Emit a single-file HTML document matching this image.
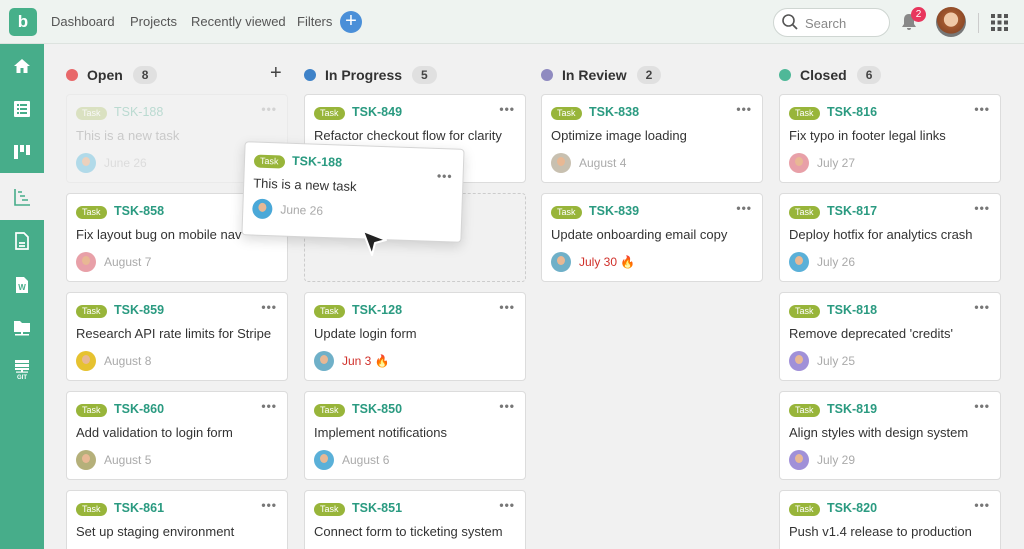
<!DOCTYPE html>
<html style="width:1024px;height:549px;overflow:hidden"><head><meta charset="utf-8"><style>
*{box-sizing:border-box;margin:0;padding:0}
body{width:1024px;height:549px;overflow:hidden;background:#f1f1f1;font-family:"Liberation Sans",sans-serif;position:relative}
.top{position:absolute;left:0;top:0;width:1024px;height:44px;background:#eef3f0;border-bottom:1px solid #dde3df}
.logo{position:absolute;left:9px;top:8px;width:28px;height:28px;background:#47b08a;border-radius:5px;color:#fff;font-weight:bold;font-size:17px;text-align:center;line-height:27px}
.nav{position:absolute;top:14px;font-size:13px;color:#555}
.plus{position:absolute;left:340px;top:11px;width:22px;height:22px;border-radius:50%;background:#4a8fd8;color:#fff;text-align:center;font-size:20px;line-height:21px}
.search{position:absolute;left:773px;top:8px;width:117px;height:29px;border:1px solid #cfd6d2;border-radius:15px;background:#fff;font-size:13px;color:#888;padding:7px 0 0 31px}
.side{position:absolute;left:0;top:44px;width:44px;height:505px;background:#47ad8a}
.act{position:absolute;left:0;top:173px;width:44px;height:47px;background:#f1f1f1}
.ic{position:absolute;left:13px;width:18px;height:18px}
.hd{position:absolute;top:66px;font-size:14px;font-weight:bold;color:#333;display:flex;align-items:center}
.dot{width:12px;height:12px;border-radius:50%;margin-right:9px}
.cnt{margin-left:10px;background:#e0e0e0;border-radius:10px;font-size:12px;padding:2px 9px;color:#444}
.card{position:absolute;width:222px;height:89px;background:#fff;border:1px solid #dcdcdc;border-radius:4px}
.tag{position:absolute;left:9px;top:12px;background:#98b53a;color:#fff;font-size:9px;border-radius:7px;padding:1px 6px;line-height:11px}
.id{position:absolute;left:47px;top:10px;font-size:12.5px;font-weight:bold;color:#2a9a80}
.more{position:absolute;right:10px;top:7px;font-size:12px;color:#777;letter-spacing:1px;font-weight:bold}
.tt{position:absolute;left:9px;top:33px;font-size:13px;color:#333;white-space:nowrap}
.av{position:absolute;left:9px;top:58px;width:20px;height:20px;border-radius:50%;overflow:hidden}
.av:after{content:"";position:absolute;left:6px;top:4px;width:8px;height:9px;border-radius:50%;background:#e8b894}
.dt{position:absolute;left:37px;top:61px;font-size:12px;color:#aaa}
.red{color:#d0302a}
</style></head><body>
<div class="top"></div>
<div class="logo">b</div>
<div class="nav" style="left:51px">Dashboard</div>
<div class="nav" style="left:130px">Projects</div>
<div class="nav" style="left:191px">Recently viewed</div>
<div class="nav" style="left:297px">Filters</div>
<div class="plus">+</div>
<div class="search">Search</div>
<svg style="position:absolute;left:781px;top:13px" width="18" height="18" viewBox="0 0 18 18"><circle cx="7.5" cy="7.5" r="5.5" fill="none" stroke="#555" stroke-width="1.6"/><path d="M11.5 11.5L16 16" stroke="#555" stroke-width="1.8"/></svg>
<svg style="position:absolute;left:900px;top:12px" width="18" height="20" viewBox="0 0 18 20"><path d="M9 2C5 2 4 5 4 8v4l-2 3h14l-2-3V8c0-3-1-6-5-6zM7 16a2 2 0 004 0z" fill="#888"/></svg>
<div style="position:absolute;left:911px;top:7px;width:15px;height:15px;border-radius:50%;background:#e8365d;color:#fff;font-size:10px;text-align:center;line-height:15px">2</div>
<div style="position:absolute;left:936px;top:7px;width:30px;height:30px;border-radius:50%;background:radial-gradient(circle at 50% 42%,#f0c9a8 30%,#a2582f 32%,#8e4a28 60%,#777 62%)"></div>
<div style="position:absolute;left:978px;top:13px;width:1px;height:20px;background:#ccc"></div>
<svg style="position:absolute;left:991px;top:14px" width="17" height="17" viewBox="0 0 17 17" fill="#555"><rect x="0" y="0" width="4" height="4"/><rect x="6.5" y="0" width="4" height="4"/><rect x="13" y="0" width="4" height="4"/><rect x="0" y="6.5" width="4" height="4"/><rect x="6.5" y="6.5" width="4" height="4"/><rect x="13" y="6.5" width="4" height="4"/><rect x="0" y="13" width="4" height="4"/><rect x="6.5" y="13" width="4" height="4"/><rect x="13" y="13" width="4" height="4"/></svg>

<div class="side"></div><div class="act"></div>
<svg class="ic" style="top:57px" viewBox="0 0 18 18"><path d="M9 2L1 9h2.5v7h4v-5h3v5h4V9H17z" fill="#fff"/></svg>
<svg class="ic" style="top:100px" viewBox="0 0 18 18"><rect x="1" y="1" width="16" height="16" rx="1" fill="#fff"/><g fill="#47ad8a"><rect x="4" y="4" width="2" height="2"/><rect x="7" y="4" width="7" height="2"/><rect x="4" y="8" width="2" height="2"/><rect x="7" y="8" width="7" height="2"/><rect x="4" y="12" width="2" height="2"/><rect x="7" y="12" width="7" height="2"/></g></svg>
<svg class="ic" style="top:143px" viewBox="0 0 18 18" fill="#fff"><rect x="1" y="2" width="4" height="14"/><rect x="7" y="2" width="4" height="7"/><rect x="13" y="2" width="4" height="10"/></svg>
<svg class="ic" style="top:188px" viewBox="0 0 18 18" fill="none" stroke="#47ad8a" stroke-width="1.6"><path d="M2 1v16h15M5 4h4M7 8h5M9 12h6"/></svg>
<svg class="ic" style="top:232px" viewBox="0 0 18 18" fill="none" stroke="#fff" stroke-width="1.7"><path d="M3 1h8l4 4v12H3zM6 11h6M6 14h6"/></svg>
<svg class="ic" style="top:276px" viewBox="0 0 18 18"><path d="M3 1h8l4 4v12H3z" fill="#fff"/><text x="9" y="14" font-size="8" font-weight="bold" fill="#47ad8a" text-anchor="middle" font-family="Liberation Sans">W</text></svg>
<svg class="ic" style="top:319px" viewBox="0 0 18 18" fill="#fff"><path d="M1 2h6l2 2h8v9H1z"/><rect x="8" y="13" width="2" height="2"/><rect x="2" y="15" width="14" height="1.5"/></svg>
<svg class="ic" style="top:359px;height:20px" viewBox="0 0 18 20" fill="#fff"><rect x="2" y="1" width="14" height="3"/><rect x="2" y="5" width="14" height="3"/><rect x="2" y="9" width="14" height="2"/><rect x="8" y="11" width="2" height="2"/><rect x="3" y="12.5" width="12" height="1.2"/><text x="9" y="20" font-size="6" font-weight="bold" text-anchor="middle" font-family="Liberation Sans">GIT</text></svg>

<div class="hd" style="left:66px"><span class="dot" style="background:#e8686a"></span>Open<span class="cnt">8</span></div>
<div style="position:absolute;left:270px;top:62px;font-size:20px;color:#444">+</div>
<div class="hd" style="left:304px"><span class="dot" style="background:#3e82c8"></span>In Progress<span class="cnt">5</span></div>
<div class="hd" style="left:541px"><span class="dot" style="background:#8f8ac0"></span>In Review<span class="cnt">2</span></div>
<div class="hd" style="left:779px"><span class="dot" style="background:#4fb898"></span>Closed<span class="cnt">6</span></div>

<div class="card" style="left:66px;top:94px;background:#f4f4f4;border-color:#e6e6e6;opacity:.55"><span class="tag" style="background:#c9d59a">Task</span><span class="id" style="color:#8fc9b8;font-weight:normal">TSK-188</span><span class="more" style="color:#bbb">•••</span><span class="tt" style="color:#aaa">This is a new task</span><span class="av" style="background:#7ec8e3"></span><span class="dt" style="color:#ccc">June 26</span></div>
<div class="card" style="left:66px;top:193px"><span class="tag">Task</span><span class="id">TSK-858</span><span class="tt">Fix layout bug on mobile nav</span><span class="av" style="background:#e8a0a8"></span><span class="dt">August 7</span></div>
<div class="card" style="left:66px;top:292px"><span class="tag">Task</span><span class="id">TSK-859</span><span class="more">•••</span><span class="tt">Research API rate limits for Stripe</span><span class="av" style="background:#e6c230"></span><span class="dt">August 8</span></div>
<div class="card" style="left:66px;top:391px"><span class="tag">Task</span><span class="id">TSK-860</span><span class="more">•••</span><span class="tt">Add validation to login form</span><span class="av" style="background:#b5b07a"></span><span class="dt">August 5</span></div>
<div class="card" style="left:66px;top:490px"><span class="tag">Task</span><span class="id">TSK-861</span><span class="more">•••</span><span class="tt">Set up staging environment</span><span class="av" style="background:#7a5ab0"></span></div>

<div class="card" style="left:304px;top:94px"><span class="tag">Task</span><span class="id">TSK-849</span><span class="more">•••</span><span class="tt">Refactor checkout flow for clarity</span></div>
<div style="position:absolute;left:304px;top:193px;width:222px;height:89px;border:1.5px dashed #ccc;border-radius:4px"></div>
<div class="card" style="left:304px;top:292px"><span class="tag">Task</span><span class="id">TSK-128</span><span class="more">•••</span><span class="tt">Update login form</span><span class="av" style="background:#6fb0c8"></span><span class="dt red">Jun 3 🔥</span></div>
<div class="card" style="left:304px;top:391px"><span class="tag">Task</span><span class="id">TSK-850</span><span class="more">•••</span><span class="tt">Implement notifications</span><span class="av" style="background:#5ab0d8"></span><span class="dt">August 6</span></div>
<div class="card" style="left:304px;top:490px"><span class="tag">Task</span><span class="id">TSK-851</span><span class="more">•••</span><span class="tt">Connect form to ticketing system</span><span class="av" style="background:#e6c230"></span></div>

<div class="card" style="left:541px;top:94px"><span class="tag">Task</span><span class="id">TSK-838</span><span class="more">•••</span><span class="tt">Optimize image loading</span><span class="av" style="background:#c8c0b0"></span><span class="dt">August 4</span></div>
<div class="card" style="left:541px;top:193px"><span class="tag">Task</span><span class="id">TSK-839</span><span class="more">•••</span><span class="tt">Update onboarding email copy</span><span class="av" style="background:#6fb0c8"></span><span class="dt red">July 30 🔥</span></div>

<div class="card" style="left:779px;top:94px"><span class="tag">Task</span><span class="id">TSK-816</span><span class="more">•••</span><span class="tt">Fix typo in footer legal links</span><span class="av" style="background:#e8a0a8"></span><span class="dt">July 27</span></div>
<div class="card" style="left:779px;top:193px"><span class="tag">Task</span><span class="id">TSK-817</span><span class="more">•••</span><span class="tt">Deploy hotfix for analytics crash</span><span class="av" style="background:#5ab0d8"></span><span class="dt">July 26</span></div>
<div class="card" style="left:779px;top:292px"><span class="tag">Task</span><span class="id">TSK-818</span><span class="more">•••</span><span class="tt">Remove deprecated 'credits'</span><span class="av" style="background:#a090d8"></span><span class="dt">July 25</span></div>
<div class="card" style="left:779px;top:391px"><span class="tag">Task</span><span class="id">TSK-819</span><span class="more">•••</span><span class="tt">Align styles with design system</span><span class="av" style="background:#a090d8"></span><span class="dt">July 29</span></div>
<div class="card" style="left:779px;top:490px"><span class="tag">Task</span><span class="id">TSK-820</span><span class="more">•••</span><span class="tt">Push v1.4 release to production</span><span class="av" style="background:#7a5ab0"></span></div>

<div class="card" style="left:243px;top:145px;width:220px;height:94px;transform:rotate(2deg);box-shadow:0 4px 12px rgba(0,0,0,.15);border-color:#d5d5d5"><span class="tag">Task</span><span class="id">TSK-188</span><span class="more" style="top:20px">•••</span><span class="tt">This is a new task</span><span class="av" style="background:#4aa8d8;top:56px"></span><span class="dt" style="top:59px">June 26</span></div>
<svg style="position:absolute;left:360px;top:228px" width="30" height="30" viewBox="0 0 30 30"><path d="M3 3L26 12L15 15L12 27Z" fill="#222" stroke="#fff" stroke-width="2" stroke-linejoin="round"/></svg>
</body></html>
